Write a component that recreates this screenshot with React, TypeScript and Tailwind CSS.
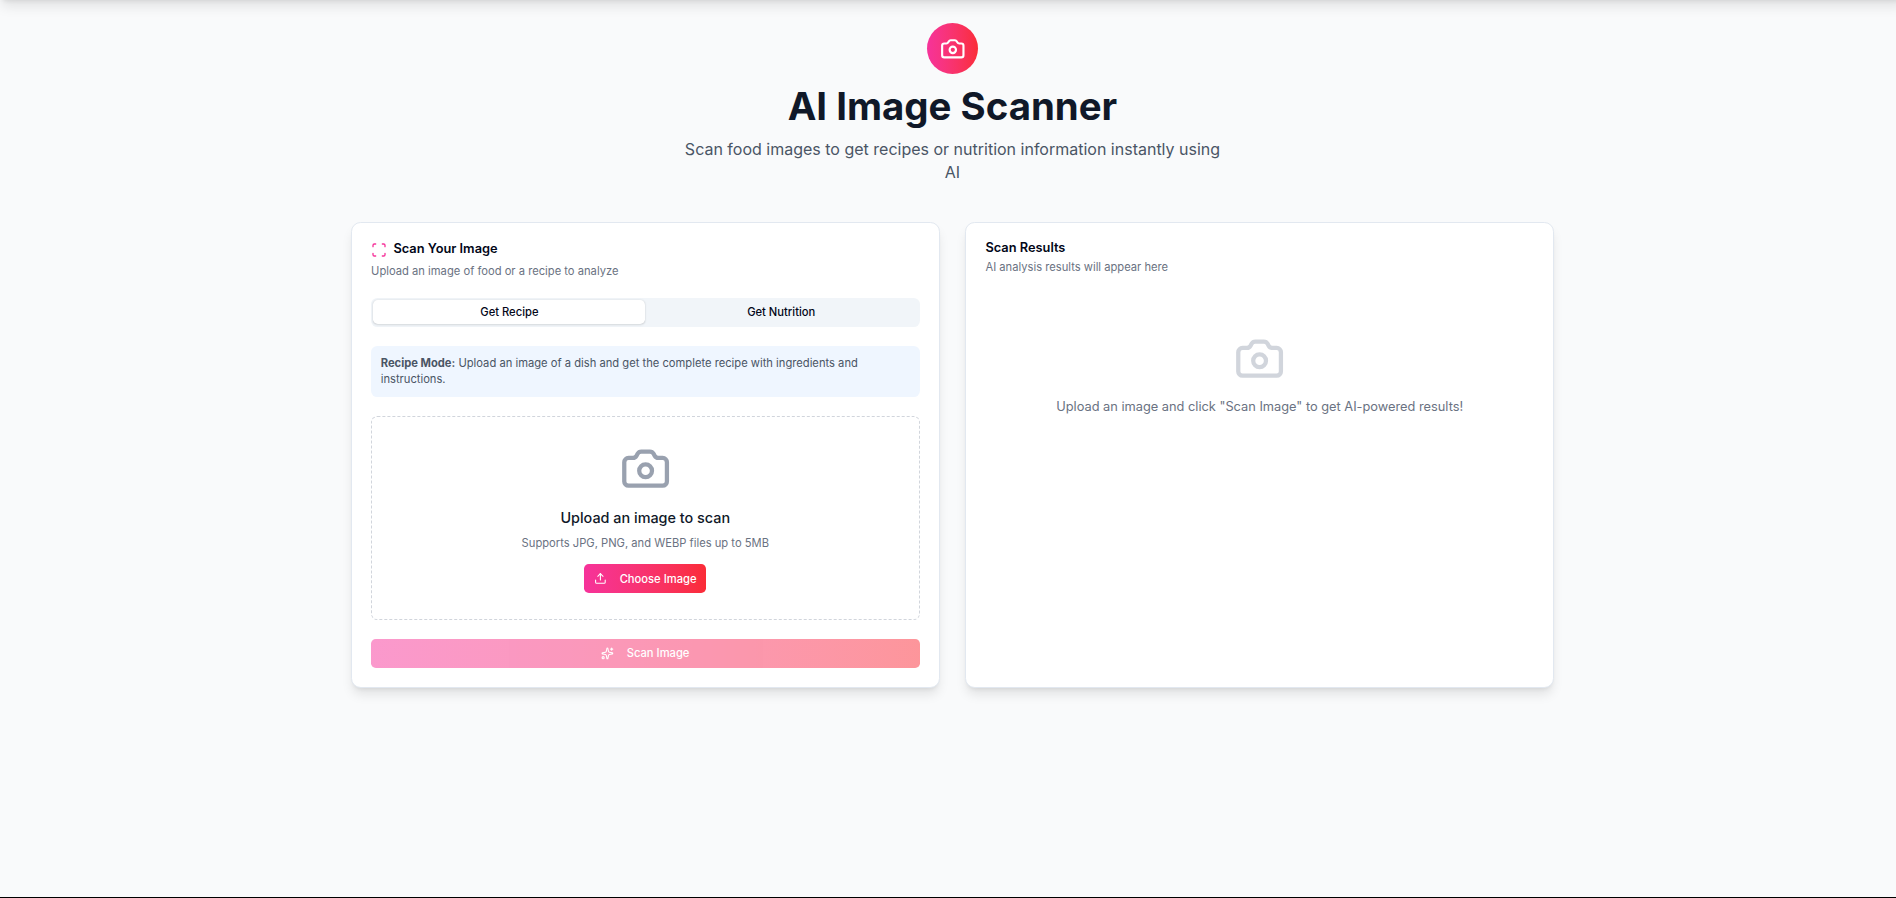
import React from "react";
import { Camera, Scan, Sparkles, Upload } from "lucide-react";

function Card({ children }: { children: React.ReactNode }) {
  return (
    <section className="flex flex-col gap-6 rounded-xl border border-slate-200 bg-white py-6 text-slate-950 shadow-lg">
      {children}
    </section>
  );
}

function Header() {
  return (
    <header className="mb-12 text-center">
      <div className="mx-auto mb-4 flex size-16 items-center justify-center rounded-full bg-linear-to-r from-pink-500 to-red-500 text-white">
        <Camera className="size-8" />
      </div>
      <h1 className="mb-4 text-5xl leading-none font-bold text-gray-900">AI Image Scanner</h1>
      <p className="mx-auto max-w-2xl text-xl text-gray-600">
        Scan food images to get recipes or nutrition information instantly using AI
      </p>
    </header>
  );
}

function ScanCard() {
  return (
    <Card>
      <div className="flex flex-col gap-1.5 px-6">
        <h2 className="flex items-center gap-2 leading-none font-semibold">
          <Scan className="size-5 text-pink-500" />
          Scan Your Image
        </h2>
        <p className="text-sm text-gray-500">Upload an image of food or a recipe to analyze</p>
      </div>
      <div className="flex flex-col gap-6 px-6">
        <div className="grid h-9 grid-cols-2 rounded-lg bg-slate-100 p-[3px] text-sm font-medium">
          <button className="rounded-md bg-white shadow-sm">Get Recipe</button>
          <button className="rounded-md">Get Nutrition</button>
        </div>
        <p className="rounded-lg bg-blue-50 p-3 text-sm text-gray-600">
          <strong>Recipe Mode:</strong> Upload an image of a dish and get the complete recipe with ingredients and
          instructions.
        </p>
        <div className="flex flex-col items-center rounded-lg border-2 border-dashed border-gray-300 p-8">
          <Camera className="mb-4 size-16 text-gray-400" />
          <h3 className="mb-2 text-lg font-medium text-gray-900">Upload an image to scan</h3>
          <p className="mb-4 text-sm text-gray-500">Supports JPG, PNG, and WEBP files up to 5MB</p>
          <button className="flex h-9 items-center gap-2 rounded-md bg-linear-to-r from-pink-500 to-red-500 px-3 text-sm font-medium text-white">
            <Upload className="mr-2 size-4" />
            Choose Image
          </button>
        </div>
        <button
          disabled
          className="flex h-9 items-center justify-center gap-2 rounded-md bg-linear-to-r from-pink-500 to-red-500 text-sm font-medium text-white opacity-50"
        >
          <Sparkles className="mr-2 size-4" />
          Scan Image
        </button>
      </div>
    </Card>
  );
}

function ResultsCard() {
  return (
    <Card>
      <div className="flex flex-col gap-1.5 px-6">
        <h2 className="leading-none font-semibold">Scan Results</h2>
        <p className="text-sm text-gray-500">AI analysis results will appear here</p>
      </div>
      <div className="flex flex-col items-center px-6 py-12 text-gray-500">
        <Camera className="mb-4 size-16 text-gray-300" />
        <p>Upload an image and click "Scan Image" to get AI-powered results!</p>
      </div>
    </Card>
  );
}

export default function App() {
  return (
    <div className="h-[898px] overflow-hidden bg-black pb-px font-[Inter,sans-serif]">
      <div className="relative h-full overflow-hidden bg-gray-50">
        <div className="absolute left-0 -right-3 -top-16 h-16 bg-white shadow-lg [zoom:0.8]" />
        <main className="ml-[350.9px] w-[1203.2px] pt-[23.2px]">
          <div className="[zoom:0.8]">
            <Header />
            <div className="grid grid-cols-2 gap-8">
              <ScanCard />
              <ResultsCard />
            </div>
          </div>
        </main>
      </div>
    </div>
  );
}
